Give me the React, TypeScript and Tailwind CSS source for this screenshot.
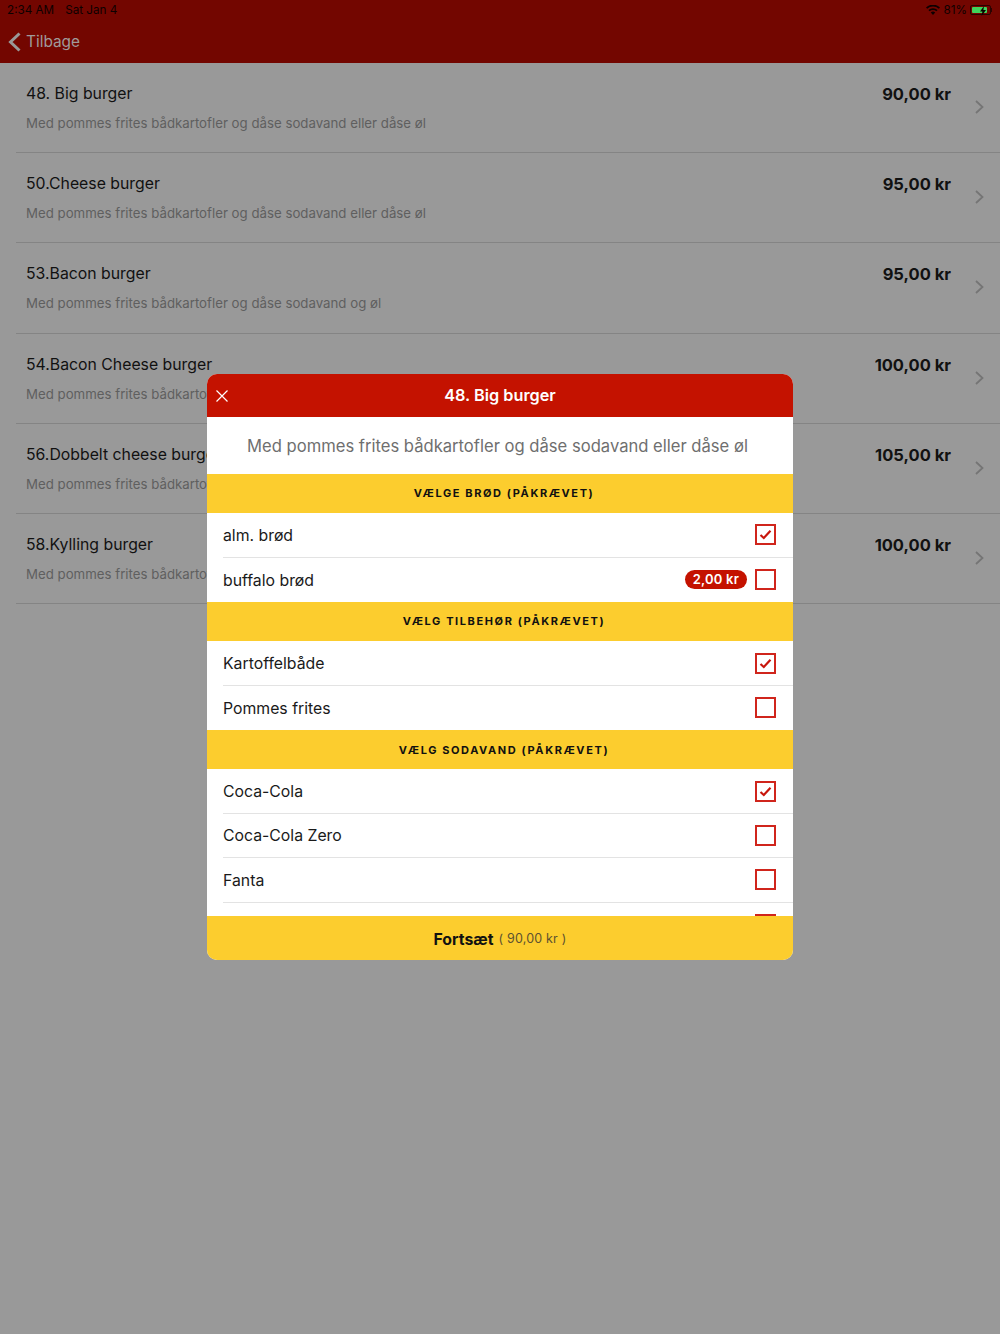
import React from "react";

const items = [
  { t: "48. Big burger", d: "Med pommes frites bådkartofler og dåse sodavand eller dåse øl", p: "90,00 kr" },
  { t: "50.Cheese burger", d: "Med pommes frites bådkartofler og dåse sodavand eller dåse øl", p: "95,00 kr" },
  { t: "53.Bacon burger", d: "Med pommes frites bådkartofler og dåse sodavand og øl", p: "95,00 kr" },
  { t: "54.Bacon Cheese burger", d: "Med pommes frites bådkartofler og dåse sodavand eller dåse øl", p: "100,00 kr" },
  { t: "56.Dobbelt cheese burger", d: "Med pommes frites bådkartofler og dåse sodavand eller dåse øl", p: "105,00 kr" },
  { t: "58.Kylling burger", d: "Med pommes frites bådkartofler og dåse sodavand eller dåse øl", p: "100,00 kr" },
];

function Check({ on }: { on?: boolean }) {
  return (
    <div className="w-[21px] h-[21px] border-2 border-[#d0251c] flex items-center justify-center shrink-0 bg-white">
      {on && (
        <svg width="13" height="11" viewBox="0 0 13 11" fill="none">
          <path d="M1.5 6 L4.8 9 L11.5 1.8" stroke="#c8160c" strokeWidth="2.2" />
        </svg>
      )}
    </div>
  );
}

function Section({ children }: { children: React.ReactNode }) {
  return (
    <div className="h-[39.3px] bg-[#fccd2e] flex items-center justify-center pl-[8px] text-[11px] font-bold tracking-[1.6px] text-[#111]">
      {children}
    </div>
  );
}

function Opt({ label, on, price, last }: { label: string; on?: boolean; price?: string; last?: boolean }) {
  return (
    <div className={`h-[44.4px] ml-4 pr-[17px] flex items-center justify-between ${last ? "" : "border-b border-[#e3e3e3]"}`}>
      <span className="text-[15.8px] pt-[1px] text-[#1a1a1a]">{label}</span>
      <div className="flex items-center gap-2">
        {price && (
          <span className="h-[19px] px-2 rounded-full bg-[#c41200] text-white text-[13px] font-semibold flex items-center tracking-[0.2px]">
            {price}
          </span>
        )}
        <Check on={on} />
      </div>
    </div>
  );
}

export default function App() {
  return (
    <div className="relative w-[1000px] h-[1334px] bg-[#999999] overflow-hidden font-['Inter',sans-serif]">
      <div className="h-[63px] bg-[#730600] relative">
        <div className="h-[20px] pt-[1px] pl-[7px] pr-[8px] flex items-center justify-between text-[11.7px] text-[#0d0100]">
          <div className="flex gap-[11px]">
            <span>2:34 AM</span>
            <span>Sat Jan 4</span>
          </div>
          <div className="flex items-center gap-[3px]">
            <svg width="14" height="10" viewBox="0 0 14 10" className="mr-[1px]">
              <path d="M7 10 L4.8 7.6 A3.2 3.2 0 0 1 9.2 7.6 Z M3.6 6.3 L2.4 5 A6.6 6.6 0 0 1 11.6 5 L10.4 6.3 A4.9 4.9 0 0 0 3.6 6.3 Z M1.2 3.8 L0 2.5 A10 10 0 0 1 14 2.5 L12.8 3.8 A8.3 8.3 0 0 0 1.2 3.8 Z" fill="#0d0100" />
            </svg>
            <span>81%</span>
            <div className="flex items-center">
              <div className="w-[21px] h-[10px] rounded-[2px] border border-[#2a0300] p-[1px]">
                <div className="relative w-[15px] h-full bg-[#3fd45b] rounded-[1px]">
                  <svg className="absolute left-[7px] -top-[1px]" width="8" height="10" viewBox="0 0 8 10">
                    <path d="M5 0 L1 5.6 H3.4 L2.6 10 L7 4 H4.4 Z" fill="#0d0100" />
                  </svg>
                </div>
              </div>
              <div className="w-[1px] h-[4px] bg-[#2a0300]" />
            </div>
          </div>
        </div>
        <div className="h-[43px] flex items-center pl-[8px] gap-[5px]">
          <svg width="13" height="20" viewBox="0 0 13 20" fill="none">
            <path d="M11.5 1.5 L2.5 10 L11.5 18.5" stroke="#999999" strokeWidth="3" />
          </svg>
          <span className="text-[15.4px] text-[#a09a9a]">Tilbage</span>
        </div>
      </div>

      <div>
        {items.map((it) => (
          <div key={it.t} className="h-[90.2px] ml-4 pl-[10px] pr-[16px] border-b border-[#848484]">
            <div className="flex justify-between pt-[18px]">
              <div className="flex flex-col">
                <span className="text-[15.8px] leading-[24px] pt-[1px] h-[24px] text-[#111]">{it.t}</span>
                <span className="text-[13.25px] leading-[20px] mt-[8px] text-[#5f5f5f]">{it.d}</span>
              </div>
              <div className="flex">
                <span className="text-[16.5px] leading-[26px] font-bold text-[#111] mr-[24px]">{it.p}</span>
                <svg className="mt-[19px]" width="9" height="14" viewBox="0 0 9 14" fill="none">
                  <path d="M1 1 L7.5 7 L1 13" stroke="#757575" strokeWidth="1.8" />
                </svg>
              </div>
            </div>
          </div>
        ))}
      </div>

      <div className="absolute left-[207px] top-[374px] w-[586px] h-[586px] rounded-[10px] overflow-hidden bg-white flex flex-col">
        <div className="relative h-[43px] bg-[#c41200] flex items-center justify-center text-white text-[16.3px] font-semibold">
          <svg className="absolute left-[8px] top-[15px]" width="14" height="14" viewBox="0 0 14 14" fill="none">
            <path d="M1.5 1.5 L12.5 12.5 M12.5 1.5 L1.5 12.5" stroke="#fff" strokeWidth="1.2" />
          </svg>
          48. Big burger
        </div>
        <div className="h-[57px] flex items-center justify-center pr-[5px] pt-[2px] text-[16.6px] text-[#6f6f6f]">
          Med pommes frites bådkartofler og dåse sodavand eller dåse øl
        </div>
        <div className="flex-1 overflow-hidden">
          <Section>VÆLGE BRØD (PÅKRÆVET)</Section>
          <Opt label="alm. brød" on />
          <Opt label="buffalo brød" price="2,00 kr" last />
          <Section>VÆLG TILBEHØR (PÅKRÆVET)</Section>
          <Opt label="Kartoffelbåde" on />
          <Opt label="Pommes frites" last />
          <Section>VÆLG SODAVAND (PÅKRÆVET)</Section>
          <Opt label="Coca-Cola" on />
          <Opt label="Coca-Cola Zero" />
          <Opt label="Fanta" />
        </div>
        <div className="relative h-[44px] bg-[#fccd2e] flex items-center justify-center gap-[5px] pt-[3px]">
          <div className="absolute right-[17px] -top-[2px] w-[21px] h-[2px] bg-[#d0251c]" />
          <span className="text-[15.8px] font-bold text-[#111]">Fortsæt</span>
          <span className="text-[12.5px] text-[#5c5230] tracking-[0.2px]">( 90,00 kr )</span>
        </div>
      </div>
    </div>
  );
}
